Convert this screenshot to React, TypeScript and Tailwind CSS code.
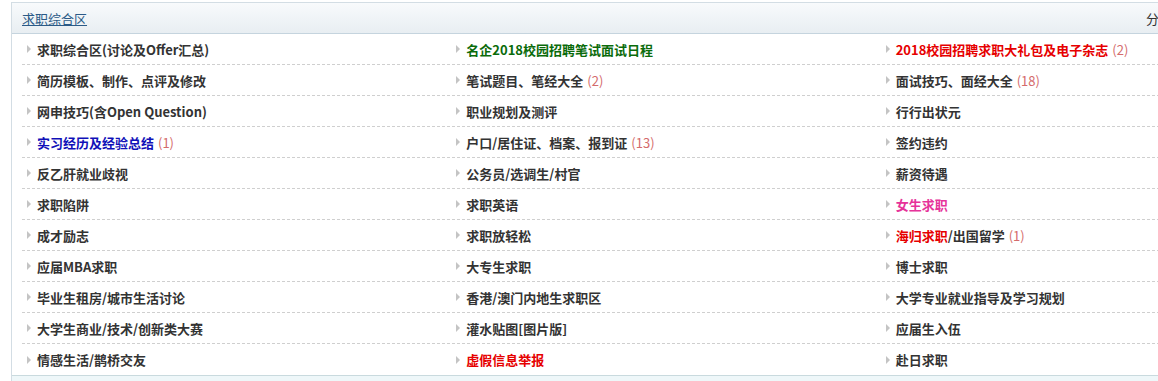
type Item = {
  name: string;
  color?: string;
  count?: string;
  extra?: string;
};

const rows: Item[][] = [
  [
    { name: "求职综合区(讨论及Offer汇总)" },
    { name: "名企2018校园招聘笔试面试日程", color: "text-[#0a6b0a]" },
    { name: "2018校园招聘求职大礼包及电子杂志", color: "text-[#e60000]", count: "(2)" },
  ],
  [
    { name: "简历模板、制作、点评及修改" },
    { name: "笔试题目、笔经大全", count: "(2)" },
    { name: "面试技巧、面经大全", count: "(18)" },
  ],
  [{ name: "网申技巧(含Open Question)" }, { name: "职业规划及测评" }, { name: "行行出状元" }],
  [
    { name: "实习经历及经验总结", color: "text-[#1010b8]", count: "(1)" },
    { name: "户口/居住证、档案、报到证", count: "(13)" },
    { name: "签约违约" },
  ],
  [{ name: "反乙肝就业歧视" }, { name: "公务员/选调生/村官" }, { name: "薪资待遇" }],
  [{ name: "求职陷阱" }, { name: "求职英语" }, { name: "女生求职", color: "text-[#e6339a]" }],
  [
    { name: "成才励志" },
    { name: "求职放轻松" },
    { name: "海归求职", color: "text-[#e60000]", extra: "/出国留学", count: "(1)" },
  ],
  [{ name: "应届MBA求职" }, { name: "大专生求职" }, { name: "博士求职" }],
  [{ name: "毕业生租房/城市生活讨论" }, { name: "香港/澳门内地生求职区" }, { name: "大学专业就业指导及学习规划" }],
  [{ name: "大学生商业/技术/创新类大赛" }, { name: "灌水贴图[图片版]" }, { name: "应届生入伍" }],
  [{ name: "情感生活/鹊桥交友" }, { name: "虚假信息举报", color: "text-[#e60000]" }, { name: "赴日求职" }],
];

function Cell({ item }: { item: Item }) {
  return (
    <div className="w-[433px] pl-[5px] flex items-center">
      <span className="w-0 h-0 border-y-[4px] border-y-transparent border-l-[4px] border-l-[#c4c4c4] mr-[6px]" />
      <span className={`font-bold ${item.color ?? "text-[#333]"}`}>{item.name}</span>
      {item.extra && <span className="font-bold text-[#333]">{item.extra}</span>}
      {item.count && <span className="ml-[4px] text-[#d46b6b]">{item.count}</span>}
    </div>
  );
}

export default function App() {
  return (
    <div
      className="w-[1158px] h-[381px] overflow-hidden bg-white pt-[2px] pl-[11px] text-[13px] leading-none"
      style={{ fontFamily: '"Noto Sans CJK SC", "Liberation Sans", sans-serif' }}
    >
      <div className="w-[1300px] border border-[#d3dde4]">
        {/* header */}
        <div className="h-[31px] flex items-center px-[10px] bg-gradient-to-b from-[#f8fafc] to-[#e8eef2] border-b border-[#c5d4de]">
          <a className="text-[#2b5a87] underline">求职综合区</a>
          <span className="ml-auto w-[154px] text-[#333]">分区版主: *空缺中*</span>
        </div>

        {rows.map((row, i) => (
          <div
            key={i}
            className={`ml-[10px] h-[31px] flex items-center ${
              i < rows.length - 1 ? "border-b border-dashed border-[#cfcfcf]" : ""
            }`}
          >
            {row.map((item, j) => (
              <Cell key={j} item={item} />
            ))}
          </div>
        ))}

        <div className="h-[20px] bg-[#eef7f9] border-t border-[#c9dade]" />
      </div>
    </div>
  );
}
